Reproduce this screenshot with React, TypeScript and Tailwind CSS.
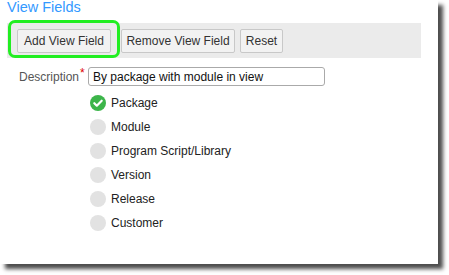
const fields = [
  { label: "Package", checked: true },
  { label: "Module", checked: false },
  { label: "Program Script/Library", checked: false },
  { label: "Version", checked: false },
  { label: "Release", checked: false },
  { label: "Customer", checked: false },
];

const Check = ({ checked }: { checked: boolean }) =>
  checked ? (
    <svg width="16" height="16" viewBox="0 0 16 16">
      <circle cx="8" cy="8" r="8" fill="#3cb54a" />
      <path d="M4.3 8.2l2.5 2.5 4.9-5" fill="none" stroke="#fff" strokeWidth="2.2" strokeLinecap="round" strokeLinejoin="round" />
    </svg>
  ) : (
    <span className="block h-4 w-4 rounded-full bg-[#e2e2e2]" />
  );

const App = () => {
  return (
    <div className="h-[275px] w-[449px] overflow-hidden bg-white font-['Liberation_Sans',Arial,sans-serif] text-[12px] text-[#222]">
      <div className="relative h-[264px] w-[438px] bg-white shadow-[5px_5px_4px_rgba(0,0,0,0.7)]">
        <h1 className="pl-[7px] text-[14.5px] leading-[15px] text-[#3399ff]">View Fields</h1>

        <div className="ml-[7px] mt-[8px] flex h-[35px] w-[414px] items-center gap-[5px] bg-[#ebebeb] pl-[10px]">
          <button className="h-[24px] w-[94px] rounded-[2px] border border-[#c8c8c8] bg-[#f2f2f2] text-[12px] text-[#333]">Add View Field</button>
          <button className="ml-[5px] h-[24px] w-[114px] rounded-[2px] border border-[#c8c8c8] bg-[#f2f2f2] text-[12px] text-[#333]">Remove View Field</button>
          <button className="h-[24px] w-[43px] rounded-[2px] border border-[#c8c8c8] bg-[#f2f2f2] text-[12px] text-[#333]">Reset</button>
        </div>

        <div className="pointer-events-none absolute left-[8px] top-[20px] h-[38px] w-[112px] rounded-[7px] border-[3px] border-[#22ee22]" />

        <div className="mt-[9px] flex items-center">
          <label className="w-[79px] text-right text-[12px] text-[#555]">Description</label>
          <span className="-mt-[8px] w-[9px] pl-[1px] text-[12px] leading-none text-[#dd0000]">*</span>
          <div className="flex h-[19px] w-[237px] items-center rounded-[3px] border border-[#aaa] px-[4px] text-[12px] text-[#111]">By package with module in view</div>
        </div>

        <div className="ml-[90px] mt-[5px] flex flex-col">
          {fields.map((f) => (
            <div key={f.label} className="flex h-[24px] items-center gap-[5px]">
              <Check checked={f.checked} />
              <span className="text-[12px] text-[#222]">{f.label}</span>
            </div>
          ))}
        </div>
      </div>
    </div>
  );
};

export default App;
